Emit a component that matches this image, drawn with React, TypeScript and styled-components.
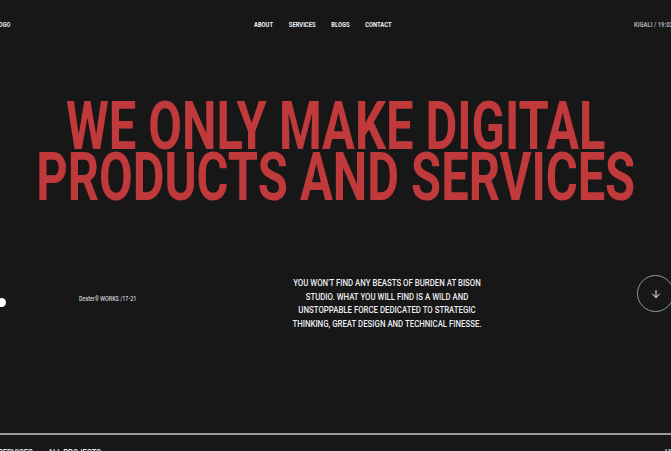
import React from "react";
import styled, { createGlobalStyle } from "styled-components";
import { ArrowDown } from "lucide-react";

const GlobalStyle = createGlobalStyle`
  html, body {
    margin: 0;
    padding: 0;
    background: #171717;
    overflow: hidden;
  }
  * { box-sizing: border-box; }
`;

const Page = styled.div`
  width: 671px;
  height: 451px;
  overflow: hidden;
  background: #171717;
  display: flex;
  flex-direction: column;
  font-family: Roboto, "Liberation Sans", sans-serif;
  color: #e8eaee;
`;

const Header = styled.header`
  height: 50px;
  flex-shrink: 0;
  display: grid;
  grid-template-columns: 254px auto 1fr;
  align-items: start;
  padding-top: 21px;
  font-size: 7px;
  line-height: 9px;
  font-weight: 700;
`;

const Condensed = styled.span<{ $k?: number }>`
  display: inline-block;
  transform: scaleX(${(p) => p.$k ?? 0.8});
  transform-origin: left center;
  white-space: nowrap;
`;

const Logo = styled(Condensed)`
  margin-left: -4px;
  color: #e4e7ec;
`;

const Nav = styled.nav`
  display: flex;
  gap: 19px;
  transform: scaleX(0.83);
  transform-origin: left center;
`;

const NavLink = styled.a`
  color: #eef1f5;
  white-space: nowrap;
  text-decoration: none;
`;

const Clock = styled(Condensed)`
  justify-self: end;
  margin-right: -9px;
  color: #a3adb7;
`;

const HeroTitle = styled.div`
  display: flex;
  justify-content: center;
  margin-top: 51px;
`;

const Headline = styled.h1`
  margin: 0;
  flex-shrink: 0;
  text-align: center;
  font-size: 66px;
  line-height: 51px;
  font-weight: 700;
  color: #c0393b;
  white-space: nowrap;
  transform: scaleX(0.74);
`;

const InfoRow = styled.section`
  margin-top: 72px;
  height: 54px;
  flex-shrink: 0;
  display: flex;
  align-items: center;
`;

const Dot = styled.span`
  width: 9px;
  height: 9px;
  border-radius: 50%;
  background: #ffffff;
  margin-left: -3px;
`;

const Credit = styled(Condensed)`
  margin-left: 73px;
  margin-top: -6px;
  font-size: 6.5px;
  font-weight: 500;
  color: #c9d0d8;
`;

const Blurb = styled.p`
  margin: 4px 0 0 119px;
  width: 240px;
  text-align: center;
  font-size: 8.6px;
  line-height: 13.5px;
  font-weight: 500;
  color: #eceef2;
  white-space: nowrap;
  transform: scaleX(0.91);
`;

const ScrollButton = styled.button`
  margin-left: auto;
  margin-right: -3px;
  margin-bottom: 17px;
  width: 37px;
  height: 37px;
  border-radius: 50%;
  border: 1px solid #8d9aa4;
  background: transparent;
  color: #ffffff;
  display: flex;
  align-items: center;
  justify-content: center;
  padding: 0;
`;

const Footer = styled.footer`
  margin-top: 104px;
  flex-shrink: 0;
  border-top: 2px solid #9b9b9b;
  padding-top: 12px;
  display: flex;
  align-items: flex-start;
  font-size: 9px;
  line-height: 12px;
  font-weight: 500;
  color: #e6e9ee;
`;

const FooterLink = styled(Condensed)<{ $gap?: number }>`
  margin-left: ${(p) => p.$gap ?? 0}px;
`;

const FooterEnd = styled(FooterLink)`
  margin-left: auto;
  margin-right: -6px;
`;

export default function App() {
  return (
    <>
      <GlobalStyle />
      <Page>
        <Header>
          <Logo>LOGO</Logo>
          <Nav>
            <NavLink>ABOUT</NavLink>
            <NavLink>SERVICES</NavLink>
            <NavLink>BLOGS</NavLink>
            <NavLink>CONTACT</NavLink>
          </Nav>
          <Clock $k={0.85}>KIGALI / 19:02</Clock>
        </Header>

        <HeroTitle>
          <Headline>
            WE ONLY MAKE DIGITAL
            <br />
            PRODUCTS AND SERVICES
          </Headline>
        </HeroTitle>

        <InfoRow>
          <Dot />
          <Credit $k={0.83}>Dexter® WORKS /17-21</Credit>
          <Blurb>
            YOU WON'T FIND ANY BEASTS OF BURDEN AT BISON
            <br />
            STUDIO. WHAT YOU WILL FIND IS A WILD AND
            <br />
            UNSTOPPABLE FORCE DEDICATED TO STRATEGIC
            <br />
            THINKING, GREAT DESIGN AND TECHNICAL FINESSE.
          </Blurb>
          <ScrollButton aria-label="Scroll down">
            <ArrowDown size={12} strokeWidth={2} />
          </ScrollButton>
        </InfoRow>

        <Footer>
          <FooterLink $k={0.85} $gap={-2}>SERVICES</FooterLink>
          <FooterLink $k={0.85} $gap={9}>ALL PROJECTS</FooterLink>
          <FooterEnd $k={0.85}>UP</FooterEnd>
        </Footer>
      </Page>
    </>
  );
}
